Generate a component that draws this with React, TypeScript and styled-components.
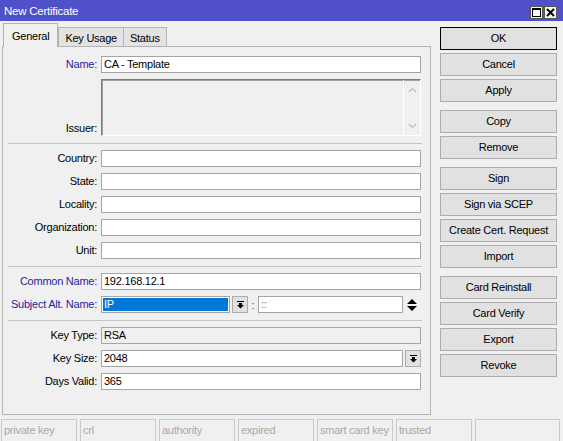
import styled, { createGlobalStyle } from "styled-components";

const GlobalStyle = createGlobalStyle`
  html, body {
    margin: 0;
    padding: 0;
    background: #f0f0f0;
  }
  body {
    font-family: "Liberation Sans", Arial, sans-serif;
    font-size: 11px;
    letter-spacing: -0.25px;
    color: #000;
  }
  * { box-sizing: border-box; }
`;

const Window = styled.div`
  width: 563px;
  height: 441px;
  display: flex;
  flex-direction: column;
  overflow: hidden;
  background: #f0f0f0;
`;

const TitleBar = styled.div`
  height: 21px;
  flex: none;
  background: #5050c8;
  color: #fff;
  display: flex;
  align-items: center;
  justify-content: space-between;
  padding: 0 6px 0 4px;
  font-size: 11.5px;
`;

const TitleButtons = styled.div`
  display: flex;
  gap: 1px;
  margin-top: 4px;
`;

const Body = styled.div`
  flex: 1;
  display: flex;
  min-height: 0;
`;

const LeftCol = styled.div`
  width: 429px;
  margin-left: 2px;
  display: flex;
  flex-direction: column;
`;

const TabRow = styled.div`
  height: 25px;
  display: flex;
  align-items: flex-end;
  padding-left: 1px;
  position: relative;
  z-index: 1;
`;

const Tab = styled.div<{ $active?: boolean }>`
  height: ${(p) => (p.$active ? 24 : 19)}px;
  margin-bottom: ${(p) => (p.$active ? -1 : 0)}px;
  padding: ${(p) => (p.$active ? "0 8px" : "1px 6px 0")};
  border: 1px solid #b4b4b4;
  border-bottom: none;
  background: ${(p) => (p.$active ? "#f0f0f0" : "#e3e3e3")};
  display: flex;
  align-items: center;
  margin-right: ${(p) => (p.$active ? 0 : -1)}px;
`;

const Panel = styled.div`
  height: 369px;
  border: 1px solid #b4b4b4;
  background: #f0f0f0;
  padding: 9px 8px 0 0;
  display: flex;
  flex-direction: column;
`;

const Section = styled.div`
  display: flex;
  flex-direction: column;
  gap: 6px;
`;

const Sep = styled.div`
  height: 1px;
  background: #c4c4c4;
  margin: 7px 0 6px 5px;
`;

const Row = styled.div<{ $tall?: boolean }>`
  display: grid;
  grid-template-columns: 94px 320px;
  column-gap: 4px;
  align-items: ${(p) => (p.$tall ? "end" : "center")};
  height: ${(p) => (p.$tall ? 57 : 17)}px;
`;

const Label = styled.div<{ $accent?: boolean }>`
  text-align: right;
  white-space: nowrap;
  color: ${(p) => (p.$accent ? "#1e1e9e" : "#000")};
  line-height: 15px;
`;

const Field = styled.div<{ $readonly?: boolean; $dim?: boolean }>`
  height: 17px;
  flex: 1;
  border: 1px solid #a5a5a5;
  background: ${(p) => (p.$readonly ? "#f0f0f0" : "#fff")};
  color: ${(p) => (p.$dim ? "#666" : "#000")};
  padding: 0 2px;
  line-height: 15px;
  white-space: nowrap;
  overflow: hidden;
`;

const IssuerBox = styled.div`
  height: 57px;
  border: 1px solid;
  border-color: #7a7a7a #fff #fff #7a7a7a;
  box-shadow: inset 1px 1px 0 #a0a0a0;
  display: flex;
  justify-content: flex-end;
`;

const ScrollStrip = styled.div`
  width: 17px;
  border-left: 1px solid #fff;
  display: flex;
  flex-direction: column;
  justify-content: space-between;
  align-items: center;
  padding: 7px 0 6px;
`;

const Inline = styled.div`
  display: flex;
  align-items: center;
  height: 17px;
`;

const Select = styled.div`
  width: 129px;
  height: 17px;
  border: 1px solid #a5a5a5;
  background: #fff;
  padding: 1px;
`;

const Selected = styled.div`
  height: 100%;
  background: #0078d7;
  color: #fff;
  padding-left: 1px;
  line-height: 13px;
`;

const DropBtn = styled.div`
  width: 16px;
  height: 17px;
  margin-left: 2px;
  border: 1px solid #adadad;
  background: #e1e1e1;
  display: flex;
  align-items: center;
  justify-content: center;
`;

const Colon = styled.div`
  width: 10px;
  text-align: center;
  color: #555;
`;

const Spin = styled.div`
  width: 18px;
  display: flex;
  justify-content: center;
`;

const ButtonCol = styled.div`
  width: 117px;
  margin-left: 9px;
  padding-top: 6px;
  display: flex;
  flex-direction: column;
  gap: 8px;
`;

const ButtonGroup = styled.div`
  display: flex;
  flex-direction: column;
  gap: 3px;
`;

const Btn = styled.div<{ $default?: boolean }>`
  height: 23px;
  border: 1px solid ${(p) => (p.$default ? "#000" : "#adadad")};
  background: #e1e1e1;
  text-align: center;
  line-height: 21px;
  white-space: nowrap;
`;

const StatusBar = styled.div`
  height: 22px;
  flex: none;
  display: flex;
  gap: 3px;
  padding-left: 1px;
`;

const Cell = styled.div<{ $wide?: boolean }>`
  width: ${(p) => (p.$wide ? 85 : 76)}px;
  border: 1px solid #cacaca;
  border-bottom: none;
  color: #a8a8a8;
  padding-left: 2px;
  line-height: 20px;
  white-space: nowrap;
`;

const DropGlyph = () => (
  <svg width="7" height="8" viewBox="0 0 7 8">
    <rect x="0" y="0" width="7" height="1" fill="#000" />
    <rect x="2" y="2" width="3" height="2" fill="#000" />
    <polygon points="0,4 7,4 3.5,7.5" fill="#000" />
  </svg>
);

const SpinGlyph = () => (
  <svg width="10" height="14" viewBox="0 0 10 14">
    <polygon points="0,6 10,6 5,1" fill="#000" />
    <polygon points="0,8 10,8 5,13" fill="#000" />
  </svg>
);

const Chevron = ({ up }: { up?: boolean }) => (
  <svg width="9" height="6" viewBox="0 0 9 6">
    <polyline
      points={up ? "1,5 4.5,1.5 8,5" : "1,1 4.5,4.5 8,1"}
      fill="none"
      stroke="#c2c2c2"
      strokeWidth="1.5"
    />
  </svg>
);

const MaxIcon = () => (
  <svg width="13" height="13" viewBox="0 0 13 13">
    <rect x="0.5" y="0.5" width="12" height="12" fill="#f4f4f4" stroke="#555" />
    <rect x="2.5" y="2.5" width="8" height="8" fill="none" stroke="#000" />
    <rect x="2" y="2" width="9" height="2" fill="#000" />
  </svg>
);

const CloseIcon = () => (
  <svg width="13" height="13" viewBox="0 0 13 13">
    <rect x="0.5" y="0.5" width="12" height="12" fill="#f4f4f4" stroke="#555" />
    <path d="M3 3 L10 10 M10 3 L3 10" stroke="#000" strokeWidth="2" />
  </svg>
);

const addressRows = ["Country", "State", "Locality", "Organization", "Unit"];

const buttonGroups = [
  ["OK", "Cancel", "Apply"],
  ["Copy", "Remove"],
  ["Sign", "Sign via SCEP", "Create Cert. Request", "Import"],
  ["Card Reinstall", "Card Verify", "Export", "Revoke"],
];

const statusCells = ["private key", "crl", "authority", "expired", "smart card key", "trusted"];

function App() {
  return (
    <>
      <GlobalStyle />
      <Window>
        <TitleBar>
          <span>New Certificate</span>
          <TitleButtons>
            <MaxIcon />
            <CloseIcon />
          </TitleButtons>
        </TitleBar>
        <Body>
          <LeftCol>
            <TabRow>
              <Tab $active>General</Tab>
              <Tab>Key Usage</Tab>
              <Tab>Status</Tab>
            </TabRow>
            <Panel>
              <Section>
                <Row>
                  <Label $accent>Name:</Label>
                  <Field>CA - Template</Field>
                </Row>
                <Row $tall>
                  <Label>Issuer:</Label>
                  <IssuerBox>
                    <ScrollStrip>
                      <Chevron up />
                      <Chevron />
                    </ScrollStrip>
                  </IssuerBox>
                </Row>
              </Section>
              <Sep />
              <Section>
                {addressRows.map((r) => (
                  <Row key={r}>
                    <Label>{r}:</Label>
                    <Field />
                  </Row>
                ))}
              </Section>
              <Sep />
              <Section>
                <Row>
                  <Label $accent>Common Name:</Label>
                  <Field>192.168.12.1</Field>
                </Row>
                <Row>
                  <Label $accent>Subject Alt. Name:</Label>
                  <Inline>
                    <Select>
                      <Selected>IP</Selected>
                    </Select>
                    <DropBtn>
                      <DropGlyph />
                    </DropBtn>
                    <Colon>:</Colon>
                    <Field $dim>::</Field>
                    <Spin>
                      <SpinGlyph />
                    </Spin>
                  </Inline>
                </Row>
              </Section>
              <Sep />
              <Section>
                <Row>
                  <Label>Key Type:</Label>
                  <Field $readonly>RSA</Field>
                </Row>
                <Row>
                  <Label>Key Size:</Label>
                  <Inline>
                    <Field>2048</Field>
                    <DropBtn>
                      <DropGlyph />
                    </DropBtn>
                  </Inline>
                </Row>
                <Row>
                  <Label>Days Valid:</Label>
                  <Field>365</Field>
                </Row>
              </Section>
            </Panel>
          </LeftCol>
          <ButtonCol>
            {buttonGroups.map((g, i) => (
              <ButtonGroup key={i}>
                {g.map((b) => (
                  <Btn key={b} $default={b === "OK"}>
                    {b}
                  </Btn>
                ))}
              </ButtonGroup>
            ))}
          </ButtonCol>
        </Body>
        <StatusBar>
          {statusCells.map((c) => (
            <Cell key={c}>{c}</Cell>
          ))}
          <Cell $wide />
        </StatusBar>
      </Window>
    </>
  );
}

export default App;
